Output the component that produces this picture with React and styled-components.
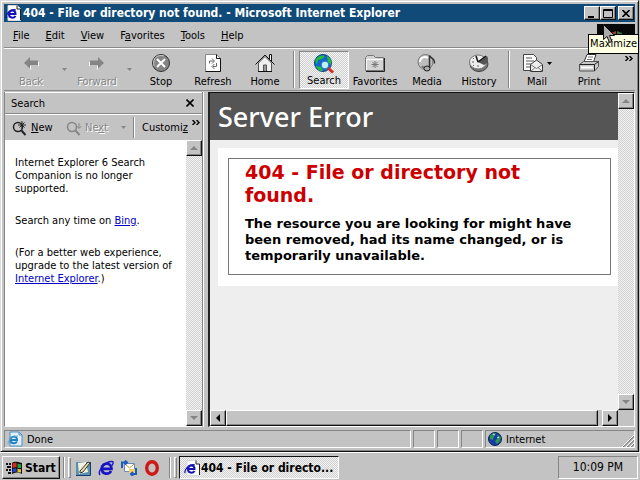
import React from "react";
import styled, { createGlobalStyle, css } from "styled-components";

const face = "#c3c3c3";
const dither = "repeating-conic-gradient(#cfcfcf 0 25%, #f4f4f4 0 50%) 0 0 / 2px 2px";
const ui = `"DejaVu Sans Condensed", "Noto Sans", sans-serif`;

const raised = css`
  border: 1px solid;
  border-color: #fff #111 #111 #fff;
  box-shadow: inset -1px -1px #858585;
`;
const sunken = css`
  border: 1px solid;
  border-color: #858585 #fff #fff #858585;
`;

const Global = createGlobalStyle`
  *, *::before, *::after { box-sizing: border-box; }
  body { margin: 0; background: ${face}; font: 11px/13px ${ui}; color: #000; }
  button { font: inherit; color: inherit; background: none; border: 0; padding: 0; margin: 0; border-radius: 0; }
  p, h1, h2, h3 { margin: 0; }
  svg { display: block; flex: none; }
`;

const Desktop = styled.div`
  display: flex;
  flex-direction: column;
  min-height: 100vh;
`;
const Window = styled.main`
  flex: 1;
  display: flex;
  flex-direction: column;
  margin-right: 1px;
  padding: 3px;
  background: ${face};
  border: 1px solid;
  border-color: #dcdcdc #111 #111 #dcdcdc;
  box-shadow: inset 1px 1px #fff, inset -1px -1px #858585;
`;
const TitleBar = styled.header`
  display: flex;
  align-items: center;
  height: 18px;
  padding: 0 1px 0 1px;
  gap: 2px;
  background: #0f4a78;
  color: #fff;
`;
const Title = styled.h1`
  flex: 1;
  font: bold 12px/18px ${ui};
  white-space: nowrap;
  overflow: hidden;
`;
const CaptionButtons = styled.div`
  display: flex;
  & > :last-child { margin-left: 2px; }
`;
const CaptionButton = styled.button`
  position: relative;
  width: 16px;
  height: 14px;
  display: grid;
  place-items: center;
  background: ${face};
  color: #000;
  ${raised}
`;
const Tooltip = styled.span`
  position: absolute;
  z-index: 3;
  top: 27px;
  right: -24px;
  padding: 2px 1px;
  background: #ffffe1;
  border: 1px solid #000;
  font: 11px/14px ${ui};
  white-space: nowrap;
`;
const Pointer = styled.span`
  position: absolute;
  z-index: 4;
  top: 17px;
  left: 2px;
`;
const MenuBar = styled.nav`
  display: flex;
  align-items: center;
  height: 26px;
  padding: 1px 0 0 2px;
  border-bottom: 1px solid #8a8a8a;
`;
const MenuItem = styled.button`
  padding: 2px 7px;
  margin-right: 2px;
`;
const Brand = styled.div`
  align-self: stretch;
  margin: 1px 0 0 auto;
  width: 38px;
  display: grid;
  place-items: center;
  background: #080808;
`;
const ToolBar = styled.div`
  display: flex;
  height: 43px;
  padding: 2px 0 2px 1px;
  border-top: 1px solid #fff;
  border-bottom: 1px solid #8a8a8a;
`;
const Tool = styled.button`
  flex: 0 0 ${(p) => p.$width || 52}px;
  height: 38px;
  display: flex;
  flex-direction: column;
  align-items: center;
  justify-content: space-between;
  padding: 2px 0 1px;
  white-space: nowrap;
  &:disabled { color: #878787; text-shadow: 1px 1px #fff; }
  ${(p) => p.$pressed && css`
    border: 1px solid;
    border-color: #858585 #fff #fff #858585;
    background: ${dither};
  `}
`;
const IconWithDrop = styled.span`
  display: flex;
  align-items: center;
  gap: 3px;
`;
const Drop = styled.button`
  flex: 0 0 ${(p) => p.$width || 14}px;
  display: grid;
  place-items: center;
`;
const Divider = styled.span`
  flex: 0 0 2px;
  align-self: stretch;
  margin: ${(p) => p.$margin || "0 3px"};
  border-left: 1px solid #858585;
  border-right: 1px solid #fff;
`;
const More = styled.button`
  margin-left: auto;
  padding: 5px 2px;
  align-self: flex-start;
`;
const Body = styled.div`
  flex: 1;
  display: flex;
  min-height: 0;
  padding: 1px 0 3px;
`;
const SideBar = styled.aside`
  flex: 0 0 199px;
  min-width: 0;
  display: flex;
  flex-direction: column;
  border-left: 1px solid #858585;
  border-right: 1px solid #858585;
  border-bottom: 1px solid #fff;
`;
const SideHead = styled.div`
  display: flex;
  align-items: center;
  justify-content: space-between;
  height: 22px;
  padding: 0 8px 0 6px;
  border-top: 1px solid #fff;
  border-bottom: 1px solid #8a8a8a;
`;
const SideTools = styled.div`
  display: flex;
  align-items: center;
  height: 26px;
  padding-left: 7px;
  border-top: 1px solid #fff;
`;
const SideTool = styled.button`
  display: flex;
  align-items: center;
  gap: 3px;
  flex: 0 0 ${(p) => (p.$width ? `${p.$width}px` : "auto")};
  white-space: nowrap;
  &:disabled { color: #878787; text-shadow: 1px 1px #fff; }
`;
const Scrollable = styled.div`
  flex: 1;
  display: flex;
  min-height: 0;
`;
const SideText = styled.div`
  flex: 1;
  min-width: 0;
  padding: 16px 10px;
  background: #fff;
  display: flex;
  flex-direction: column;
  gap: 19px;
`;
const Link = styled.a`
  color: #0000c8;
`;
const VBar = styled.div`
  flex: 0 0 16px;
  display: flex;
  flex-direction: column;
  justify-content: space-between;
  background: ${dither};
`;
const ArrowButton = styled.button`
  width: 16px;
  height: 16px;
  display: grid;
  place-items: center;
  background: ${face};
  ${raised}
`;
const Splitter = styled.div`
  flex: 0 0 5px;
  border-left: 1px solid #fff;
`;
const Page = styled.section`
  flex: 1;
  min-width: 0;
  display: flex;
  flex-direction: column;
  border: solid;
  border-width: 1px 1px 1px 2px;
  border-color: #111 #fff #fff #222;
`;
const Document = styled.article`
  flex: 1;
  min-width: 0;
  background: #eee;
`;
const ServerBanner = styled.h2`
  padding: 9px 8px 8px;
  background: #555;
  color: #fff;
  font: 500 27px/30px "Noto Sans", sans-serif;
`;
const Card = styled.div`
  margin: 8px 0 0 8px;
  padding: 10px 7px 11px 10px;
  background: #fff;
`;
const Frame = styled.div`
  border: 1px solid #777;
  padding: 2px 16px 10px;
  font-family: "DejaVu Sans", sans-serif;
`;
const ErrorTitle = styled.h2`
  font-size: 19px;
  line-height: 23px;
  color: #c00;
`;
const ErrorText = styled.h3`
  margin-top: 9px;
  font-size: 13px;
  line-height: 16px;
  max-width: 340px;
`;
const HBar = styled.div`
  display: flex;
  height: 16px;
  background: ${face};
`;
const HThumb = styled.div`
  flex: 1;
  background: ${face};
  ${raised}
`;
const Gap = styled.span`
  flex: 0 0 ${(p) => p.$width}px;
`;
const StatusBar = styled.footer`
  display: flex;
  gap: 2px;
  height: 18px;
`;
const Pane = styled.div`
  flex: ${(p) => (p.$width ? `0 0 ${p.$width}px` : 1)};
  display: flex;
  align-items: center;
  gap: 4px;
  padding-left: 2px;
  ${sunken}
`;
const Grip = styled.div`
  margin-left: auto;
  align-self: flex-end;
`;
const TaskBar = styled.footer`
  display: flex;
  align-items: stretch;
  height: 28px;
  padding: 3px 2px 1px;
  border-top: 1px solid #fff;
  background: ${face};
`;
const Start = styled.button`
  display: flex;
  align-items: center;
  gap: 2px;
  flex: 0 0 58px;
  padding-left: 3px;
  font: bold 12px/16px ${ui};
  ${raised}
`;
const QuickLaunch = styled.div`
  display: flex;
  align-items: center;
  gap: 7px;
  padding: 0 9px 0 2px;
`;
const Handle = styled.span`
  flex: 0 0 3px;
  margin: 1px 2px;
  border: 1px solid;
  border-color: #fff #858585 #858585 #fff;
`;
const Task = styled.button`
  flex: 0 1 160px;
  display: flex;
  align-items: center;
  padding-left: 4px;
  gap: 1px;
  font: bold 12px/16px ${ui};
  white-space: nowrap;
  background: ${dither};
  border: 1px solid;
  border-color: #111 #fff #fff #111;
`;
const Clock = styled.time`
  margin-left: auto;
  flex: 0 0 80px;
  display: grid;
  place-items: center;
  font-size: 12px;
  ${sunken}
`;

const Svg = ({ w = 16, h = w, box, children }) => (
  <svg width={w} height={h} viewBox={box || `0 0 ${w} ${h}`} fill="none" aria-hidden="true">{children}</svg>
);

const PageIcon = () => (
  <Svg>
    <path d="M3 .5h9l3.500 3V15.500H3z" fill="#fff" stroke="#d8d8d8" />
    <path d="M12 .5v3.500h3.500V15" stroke="#222" />
    <path d="M4 9h6.500C10.500 4.500 4.500 4.500 4 8.800c-.3 4.700 5 4.700 6.500 2.200" stroke="#1414b4" strokeWidth="2" />
    <path d="M1 13C0 9 6 3.500 11 5" stroke="#1414b4" strokeWidth="1.300" />
  </Svg>
);
const IE = ({ size = 16, color = "#1616c8" }) => (
  <Svg w={size} box="0 0 16 16">
    <path d="M4 8.800h9.500C13.500 1.800 4 2 3.800 8.500c-.2 6.500 7.500 6.200 9.200 2.500" stroke={color} strokeWidth="2.700" />
    <path d="M2 15C-1 11 8 1 14 1.500c2 .2 1 2.500 0 4" stroke={color} strokeWidth="1.400" />
  </Svg>
);
const DoneIcon = () => (
  <Svg>
    <path d="M3 1h9l3 3v11H3z" fill="#e2f1fb" stroke="#4d8fc2" />
    <path d="M12 1v3h3" stroke="#4d8fc2" />
    <path d="M3 9h7c0-5-6.500-4-6.500 0s5 4 6.500 1.500" stroke="#207fc2" strokeWidth="2" />
    <path d="M1 13c0-4 5-8 10-8" stroke="#57a8dc" />
  </Svg>
);
const Arrow = ({ flip }) => (
  <Svg w={16} h={20} box="0 -3 16 20">
    <g transform={flip ? "translate(16 0) scale(-1 1)" : undefined}>
      <path d="M2 8l6 6v-4h8V6" fill="#fff" />
      <path d="M1 7l6-6v3.500h8v5H7V13z" fill="#858585" />
    </g>
  </Svg>
);
const Down = ({ color = "#000" }) => <Svg w={5} h={3}><path d="M0 0h5L2.500 3z" fill={color} /></Svg>;
const Chevrons = () => (
  <Svg w={8} h={5}><path d="M.5 0l2.500 2.500L.5 5M4.500 0L7 2.500 4.500 5" stroke="#000" strokeWidth="1.400" /></Svg>
);
const StopIcon = () => (
  <Svg w={20}>
    <circle cx="10" cy="10" r="8.500" fill="#858585" stroke="#333" />
    <path d="M3 13C1 5 7 1 13 3" stroke="#ccc" />
    <path d="M6 6l8 8M14 6l-8 8" stroke="#fff" strokeWidth="2" />
  </Svg>
);
const RefreshIcon = () => (
  <Svg w={20}>
    <path d="M2.500 1.500h11l4 4v13h-15z" fill="#fff" stroke="#888" />
    <path d="M13.500 1.500v4h4v13h-15" stroke="#111" />
    <path d="M6.500 10.500V8h4M9 5.500L11.500 8 9 10.500M13.500 10v3.500H10M11.500 11L9 13.500l2.500 2.500" stroke="#666" />
  </Svg>
);
const HomeIcon = () => (
  <Svg w={20}>
    <path d="M14.500 7V1.500h2V9" fill="#fff" stroke="#111" />
    <path d="M3.500 10L10 3.500l6.500 6.500v8.500h-13z" fill="#f0f0f0" stroke="#555" />
    <path d="M.5 11.500L10 2l9.500 9.500" stroke="#111" />
    <path d="M8.500 18v-6h3v6" fill="#999" stroke="#555" />
    <path d="M3 18.500h14" stroke="#111" />
  </Svg>
);
const SearchIcon = () => (
  <Svg w={22} h={20}>
    <circle cx="10" cy="9" r="8.500" fill="#1664cf" stroke="#123f83" />
    <path d="M3 5c3-4 7-4 9-3l-3 3-4 1-1 4C2 9 2 7 3 5zM14 2c4 2 5 6 4 9l-3-3zM3 12l5 1 2 4c-4 0-6-2-7-5z" fill="#1fc034" />
    <circle cx="12" cy="11" r="3.800" fill="#bdf1ff" stroke="#2c7fc4" strokeWidth="1.300" />
    <path d="M15 14l5 4.500" stroke="#d22d1c" strokeWidth="3" />
  </Svg>
);
const FolderIcon = () => (
  <Svg w={22} h={20}>
    <path d="M1.500 4.500l2-2h6l2 2h8v13h-18z" fill="#d4d4d4" stroke="#777" />
    <path d="M2.500 17V6.500H19" stroke="#fff" />
    <path d="M20.500 5v13.500H2" stroke="#222" />
    <path d="M11 8v7M7.500 11.500h7M8.500 9l5 5M13.500 9l-5 5" stroke="#777" />
  </Svg>
);
const MediaIcon = () => (
  <Svg w={22} h={20}>
    <circle cx="9.500" cy="9" r="7.500" fill="#bdbdbd" stroke="#777" />
    <path d="M4 9C4 4 9 3 12 5" stroke="#fff" strokeWidth="2" />
    <path d="M6 13c1 2 3 2 4 2" stroke="#777" strokeWidth="2" />
    <path d="M13.500 15V2.500c1 3 5.500 2 5 8" stroke="#333" strokeWidth="1.500" />
    <ellipse cx="11" cy="15.500" rx="3" ry="2.500" fill="#aaa" stroke="#222" />
  </Svg>
);
const HistoryIcon = () => (
  <Svg w={22} h={20}>
    <ellipse cx="11" cy="11" rx="9" ry="7.500" fill="#777" stroke="#444" />
    <ellipse cx="10" cy="9" rx="8.500" ry="7" fill="#eee" stroke="#777" />
    <path d="M10 9l9-6c2 3 1 7-3 9z" fill="#555" />
    <path d="M10 9L8 3M10 9l8-6" stroke="#111" strokeWidth="1.500" />
    <path d="M4 9h2M10 14v-2M5 5l1 1M5 13l1-1" stroke="#666" />
  </Svg>
);
const MailIcon = () => (
  <Svg w={22} h={20}>
    <path d="M1.500 1.500h10l3 3v13h-13z" fill="#fff" stroke="#444" />
    <path d="M4 5h6M4 8h8M4 11h6M4 14h4" stroke="#555" />
    <path d="M8.500 11.500l6-4.500 6 4.500v7h-12z" fill="#eee" stroke="#333" />
    <path d="M8.500 11.500l6 4 6-4M8.500 18.500l4.500-4M20.500 18.500L16 14.500" stroke="#777" />
  </Svg>
);
const PrintIcon = () => (
  <Svg w={22} h={20}>
    <path d="M6 9l3-7.500h9L15.500 9" fill="#fff" stroke="#333" />
    <path d="M10 4h5M9 6.500h5" stroke="#777" />
    <path d="M1.500 11.500l4-3h15v5l-4 4.500h-15z" fill="#c8c8c8" stroke="#555" />
    <path d="M1.500 11.500h15v6.500M16.500 11.500l4-3" stroke="#222" />
    <path d="M3 14.500h12" stroke="#fff" strokeWidth="2" />
  </Svg>
);
const Magnifier = ({ color, arrow }) => (
  <Svg w={16}>
    <circle cx="6" cy="7" r="4.500" stroke={color} strokeWidth="1.500" />
    <path d="M9.500 10.500l4 4.500" stroke={color} strokeWidth="2" />
    {arrow ? <path d="M13 3v5M10.500 6L13 8.500 15.500 6" stroke={color} /> : <path d="M10 1v8M6 5h8M7.500 2.500l5 5M12.500 2.500l-5 5" stroke={color} />}
  </Svg>
);
const Triangle = ({ d, color = "#000" }) => <Svg w={8}><path d={d} fill={color} /></Svg>;
const Globe = () => (
  <Svg w={14}>
    <circle cx="7" cy="7" r="6.500" fill="#183ca5" stroke="#0a2350" />
    <path d="M2 4c2-3 4-3 6-3L6 4 5 8 2 7zM9 3l4 2-1 4-3 3-2-3 3-3z" fill="#2c9655" />
    <path d="M5 2l2 1M9 6l2-1" stroke="#d5f5ff" />
  </Svg>
);
const Flag = () => (
  <Svg w={17} h={16}>
    <path d="M0 4h2M1 7h2M0 10h2M3 4h2M3 7h2M3 10h2M2 13h3" stroke="#111" strokeWidth="2" />
    <path d="M6 3c3-2 5-1 10 0v11c-4-2-7-2-10 0z" fill="#111" />
    <path d="M6.500 3.500c2-1 3-1 4-.5v4.500c-1-.5-2-.5-4 .5z" fill="#d52d23" />
    <path d="M11.500 3.500c1.500.8 2 .8 3.500.5v4c-1.500.3-2 0-3.500-.5z" fill="#25a33b" />
    <path d="M6.500 9c2-1 3-1 4-.5V12c-1-.5-2-.5-4 .5z" fill="#2340cc" />
    <path d="M11.500 8.500c1.500.8 2 .8 3.500.5v3.500c-1.500.3-2 0-3.500-.5z" fill="#e2c72b" />
  </Svg>
);
const DesktopIcon = () => (
  <Svg w={16}>
    <path d="M1 2h14v13H1z" fill="#5c91ae" />
    <path d="M1 15.500h14.500V2" stroke="#143c77" />
    <path d="M3 3l8-1 2 10-9 2z" fill="#f2f2e2" />
    <path d="M5 11l8-9 2 1-7 9-3 1z" fill="#e9dfa5" stroke="#333" />
  </Svg>
);
const OutlookIcon = () => (
  <Svg w={16}>
    <path d="M3.500 3.500h10v8h-10z" fill="#fff" stroke="#6b8db5" />
    <path d="M4 4l4.500 4L13 4" stroke="#c49a38" />
    <path d="M8 9h6v4H8z" fill="#f2cf68" />
    <path d="M1 8V2.500h5M4 .5l2 2-2 2M15 8v6h-5M12 12l-2 2 2 2" stroke="#1c5cbd" strokeWidth="2" />
  </Svg>
);
const OperaIcon = () => (
  <Svg w={16}>
    <ellipse cx="8" cy="8" rx="5.300" ry="6.300" stroke="#cf1717" strokeWidth="3.400" />
  </Svg>
);

const tools = [
  { label: "Stop", icon: <StopIcon /> },
  { label: "Refresh", icon: <RefreshIcon /> },
  { label: "Home", icon: <HomeIcon /> },
];
const panels = [
  { label: "Search", icon: <SearchIcon />, pressed: true, width: 50 },
  { label: "Favorites", icon: <FolderIcon /> },
  { label: "Media", icon: <MediaIcon /> },
  { label: "History", icon: <HistoryIcon /> },
];
const menus = [["", "F", "ile"], ["", "E", "dit"], ["", "V", "iew"], ["F", "a", "vorites"], ["", "T", "ools"], ["", "H", "elp"]];

const ScrollBar = () => (
  <VBar>
    <ArrowButton aria-label="Scroll up"><Triangle d="M0 6l4-4 4 4z" color="#858585" /></ArrowButton>
    <ArrowButton aria-label="Scroll down"><Triangle d="M0 2l4 4 4-4z" color="#858585" /></ArrowButton>
  </VBar>
);

export default function App() {
  return (
    <Desktop>
      <Global />
      <Window>
        <TitleBar>
          <PageIcon />
          <Title>404 - File or directory not found. - Microsoft Internet Explorer</Title>
          <CaptionButtons>
            <CaptionButton aria-label="Minimize"><Svg w={10} h={9}><path d="M1 7h6v2H1z" fill="#000" /></Svg></CaptionButton>
            <CaptionButton aria-label="Maximize">
              <Svg w={10} h={9}><path d="M.5 .5h9v8h-9zM0 1.500h10" stroke="#000" /></Svg>
              <Tooltip role="tooltip">Maximize</Tooltip>
              <Pointer>
                <Svg w={12} h={20}><path d="M.5 .5v15l3.500-3 2.500 6 2.500-1-2.500-6h5z" fill="#aaa" stroke="#111" /></Svg>
              </Pointer>
            </CaptionButton>
            <CaptionButton aria-label="Close"><Svg w={8} h={7}><path d="M.5 0l7 7M7.500 0l-7 7" stroke="#000" strokeWidth="1.600" /></Svg></CaptionButton>
          </CaptionButtons>
        </TitleBar>
        <MenuBar>
          {menus.map(([a, b, c]) => <MenuItem key={b}>{a}<u>{b}</u>{c}</MenuItem>)}
          <Brand>
            <Svg w={20} h={16}><path d="M5 5l5-2v5L5 10z" fill="#a33a28" /><path d="M11 3l5 2v5l-5-2z" fill="#34753c" /><path d="M5 11l5-2v5z" fill="#345293" /></Svg>
          </Brand>
        </MenuBar>
        <ToolBar>
          <Tool disabled><Arrow />Back</Tool>
          <Drop disabled><Down color="#858585" /></Drop>
          <Tool disabled><Arrow flip />Forward</Tool>
          <Drop disabled $width={12}><Down color="#858585" /></Drop>
          {tools.map((t) => <Tool key={t.label}>{t.icon}{t.label}</Tool>)}
          <Divider $margin="0 4px 0 2px" />
          {panels.map((t) => <Tool key={t.label} $pressed={t.pressed} $width={t.width} aria-pressed={!!t.pressed}>{t.icon}{t.label}</Tool>)}
          <Divider />
          <Tool $width={48}><IconWithDrop><MailIcon /><Down /></IconWithDrop>Mail</Tool>
          <Tool $width={56}><PrintIcon />Print</Tool>
          <More aria-label="More tools"><Chevrons /></More>
        </ToolBar>
        <Body>
          <SideBar>
            <SideHead>
              Search
              <button aria-label="Close search"><Svg w={8}><path d="M.5 .5l7 7M7.500 .5l-7 7" stroke="#000" strokeWidth="1.600" /></Svg></button>
            </SideHead>
            <SideTools>
              <SideTool $width={54}><Magnifier color="#222" /><span><u>N</u>ew</span></SideTool>
              <SideTool $width={50} disabled><Magnifier color="#858585" arrow /><span>Ne<u>x</u>t</span></SideTool>
              <Drop disabled><Down color="#858585" /></Drop>
              <Divider $margin="2px 7px 2px 3px" />
              <SideTool><span>Customi<u>z</u></span></SideTool>
              <More aria-label="More search tools"><Chevrons /></More>
            </SideTools>
            <Scrollable>
              <SideText>
                <p>Internet Explorer 6 Search<br />Companion is no longer<br />supported.</p>
                <p>Search any time on <Link href="#bing">Bing</Link>.</p>
                <p>(For a better web experience,<br />upgrade to the latest version of<br /><Link href="#ie">Internet Explorer</Link>.)</p>
              </SideText>
              <ScrollBar />
            </Scrollable>
          </SideBar>
          <Splitter />
          <Page>
            <Scrollable>
              <Document>
                <ServerBanner>Server Error</ServerBanner>
                <Card>
                  <Frame>
                    <ErrorTitle>404 - File or directory not found.</ErrorTitle>
                    <ErrorText>The resource you are looking for might have been removed, had its name changed, or is temporarily unavailable.</ErrorText>
                  </Frame>
                </Card>
              </Document>
              <ScrollBar />
            </Scrollable>
            <HBar>
              <ArrowButton aria-label="Scroll left"><Triangle d="M6 0v8L2 4z" /></ArrowButton>
              <HThumb />
              <Gap $width={4} />
              <ArrowButton aria-label="Scroll right"><Triangle d="M2 0v8l4-4z" /></ArrowButton>
              <Gap $width={16} />
            </HBar>
          </Page>
        </Body>
        <StatusBar>
          <Pane><DoneIcon />Done</Pane>
          <Pane $width={22} />
          <Pane $width={22} />
          <Pane $width={22} />
          <Pane $width={150}>
            <Globe />Internet
            <Grip><Svg w={12}><path d="M1 12L12 1M5 12l7-7M9 12l3-3" stroke="#858585" strokeWidth="1.500" /><path d="M0 12L12 0M4 12l8-8M8 12l4-4" stroke="#fff" /></Svg></Grip>
          </Pane>
        </StatusBar>
      </Window>
      <TaskBar>
        <Start><Flag />Start</Start>
        <Divider $margin="1px 1px 1px 3px" />
        <Handle />
        <QuickLaunch>
          <DesktopIcon /><IE /><OutlookIcon /><OperaIcon />
        </QuickLaunch>
        <Divider $margin="1px 1px 1px 0" />
        <Handle />
        <Task><PageIcon />404 - File or directo...</Task>
        <Clock>10:09 PM</Clock>
      </TaskBar>
    </Desktop>
  );
}
